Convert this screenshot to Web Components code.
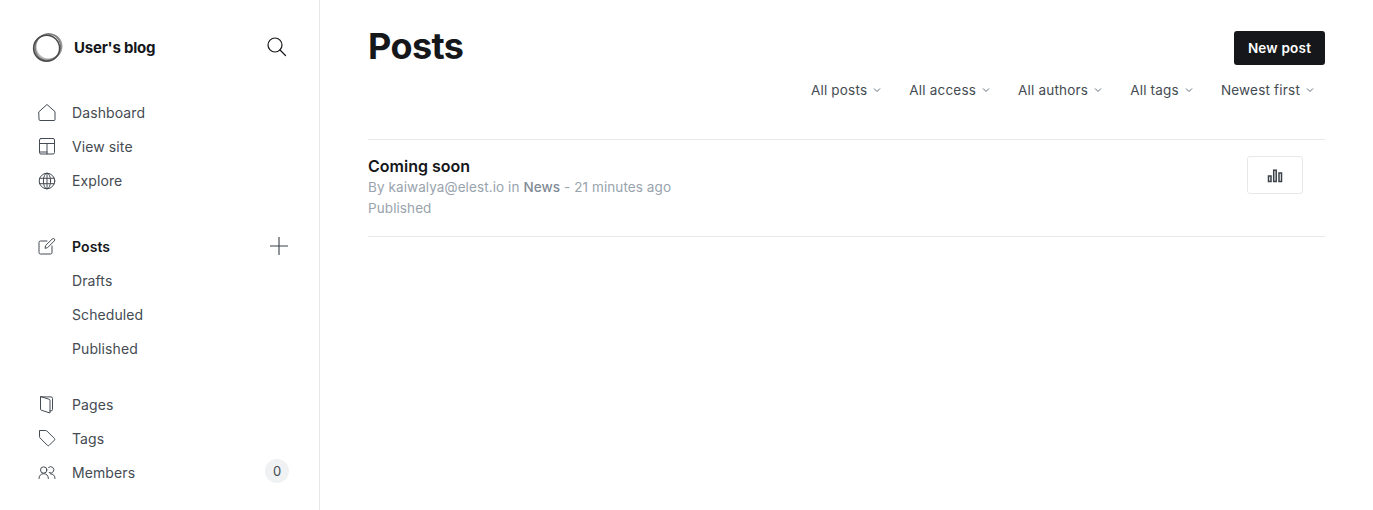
<!DOCTYPE html>
<html lang="en">
<head>
<meta charset="utf-8">
<title>Posts</title>
<style>
  html, body { margin: 0; height: 100%; background: #fff; }
  body { font-family: Inter, "Liberation Sans", sans-serif; overflow: hidden; }
</style>
</head>
<body>
<app-shell>
  <blog-sidebar slot="side">
    <nav-group>
      <nav-item label="Dashboard"><svg viewBox="0 0 18 18"><path d="M1 7.700 9 .5l8 7.200v7.800a1 1 0 0 1-1 1H2a1 1 0 0 1-1-1z"/></svg></nav-item>
      <nav-item label="View site"><svg viewBox="0 0 18 18"><rect x="1.500" y=".5" width="15" height="15.500" rx="1.500"/><path d="M1.500 5.500h15M9 5.500V16M1.500 14H9"/></svg></nav-item>
      <nav-item label="Explore"><svg viewBox="0 0 18 18"><circle cx="9" cy="9" r="7.800"/><ellipse cx="9" cy="9" rx="3.600" ry="7.800"/><path d="M1.700 6.300h14.600M1.700 11.700h14.600M9 1.200v15.600"/></svg></nav-item>
    </nav-group>
    <nav-group>
      <nav-item label="Posts" active>
        <svg viewBox="0 0 18 18"><path d="M9 3H2.500A1.500 1.500 0 0 0 1 4.500v10A1.500 1.500 0 0 0 2.500 16h10a1.500 1.500 0 0 0 1.500-1.500V8"/><path d="M14.300 .9a1.400 1.400 0 0 1 2 2L9.500 9.700 7 10.300l.6-2.500z"/></svg>
        <svg slot="end" class="plus" width="18" height="18" viewBox="0 0 18 18" fill="none" stroke="#394047" stroke-width="1.100" style="margin-right:1px"><path d="M9 0v18M0 9h18"/></svg>
      </nav-item>
      <nav-item label="Drafts"></nav-item>
      <nav-item label="Scheduled"></nav-item>
      <nav-item label="Published"></nav-item>
    </nav-group>
    <nav-group>
      <nav-item label="Pages"><svg viewBox="0 0 18 18"><path d="M2.500 .9h10.500a1.500 1.500 0 0 1 1.500 1.500v11a1.500 1.500 0 0 1-1.500 1.500h-1"/><path d="M2.500 .9v12.300c0 .4.200.7.600.9l8.900 2.900V4.200c0-.5-.300-.8-.7-.9z"/></svg></nav-item>
      <nav-item label="Tags"><svg viewBox="0 0 18 18"><path d="M2 .5h5.800c.4 0 .8.200 1 .4l7.700 7.700a1 1 0 0 1 0 1.400l-5.500 5.500a1 1 0 0 1-1.400 0L1.900 7.800a1.500 1.500 0 0 1-.4-1V1a.5.500 0 0 1 .5-.5z"/></svg></nav-item>
      <nav-item label="Members"><svg viewBox="0 0 18 18"><circle cx="5.700" cy="6" r="3.200"/><path d="M1 14.500c0-3 2-4.800 4.700-4.800s4.700 1.800 4.700 4.800"/><path d="M10.600 3.400a3.200 3.200 0 1 1 .6 5.300"/><path d="M12.500 9.800c2.600 0 4.500 1.800 4.500 4.700"/></svg><count-badge slot="end">0</count-badge></nav-item>
    </nav-group>
  </blog-sidebar>

  <posts-header>
    <filter-select>All posts</filter-select>
    <filter-select>All access</filter-select>
    <filter-select>All authors</filter-select>
    <filter-select>All tags</filter-select>
    <filter-select>Newest first</filter-select>
  </posts-header>
  <post-row></post-row>
</app-shell>

<script>
// small helper so every element gets an open root from a string
function mount(el, html) {
  el.attachShadow({ mode: 'open' }).innerHTML = html;
}

class AppShell extends HTMLElement {
  constructor() {
    super();
    mount(this, `
      <style>
        :host { display: flex; height: 510px; color: #15171a; }
        .side { flex: 0 0 319px; border-right: 1px solid #e6e9eb; }
        main { flex: 1; min-width: 0; padding: 0 48px; }
      </style>
      <div class="side"><slot name="side"></slot></div>
      <main><slot></slot></main>
    `);
  }
}

class BlogSidebar extends HTMLElement {
  constructor() {
    super();
    mount(this, `
      <style>
        :host { display: block; padding: 30px 30px 0 32px; }
        header { display: flex; align-items: center; height: 34px; margin-bottom: 32px; }
        .logo { width: 31px; height: 31px; margin-right: 11px; flex: none; }
        .name { flex: 1; font-size: 15px; font-weight: 700; letter-spacing: -.2px; }
        .search { display: block; margin-right: 2px; }
      </style>
      <header>
        <svg class="logo" viewBox="0 0 31 31" fill="none">
          <ellipse cx="16.800" cy="14.600" rx="12.900" ry="12.700" stroke="#bbb" stroke-width="1.400"/>
          <ellipse cx="16" cy="15" rx="13.800" ry="12.600" stroke="#999" stroke-width="1.500" transform="rotate(-25 16 15)"/>
          <ellipse cx="16" cy="15.200" rx="12.600" ry="13.400" stroke="#777" stroke-width="1" transform="rotate(15 16 15)"/>
          <ellipse cx="14.600" cy="16.200" rx="13" ry="13" stroke="#4a4a4a" stroke-width="1.500"/>
        </svg>
        <span class="name">User's blog</span>
        <svg class="search" width="20" height="20" viewBox="0 0 20 20" fill="none" stroke="#15171a" stroke-width="1.200" stroke-linecap="round"><circle cx="8" cy="8" r="7"/><path d="M13 13l5.500 5.500"/></svg>
      </header>
      <slot></slot>
    `);
  }
}

class NavGroup extends HTMLElement {
  constructor() {
    super();
    mount(this, `
      <style>
        :host { display: block; margin-bottom: 22px; }
        :host(:first-of-type) { margin-bottom: 32px; }
      </style>
      <slot></slot>
    `);
  }
}

class NavItem extends HTMLElement {
  constructor() {
    super();
    const active = this.hasAttribute('active');
    mount(this, `
      <style>
        :host { display: flex; align-items: center; height: 34px; font-size: 14px; letter-spacing: .1px; color: #444b52; }
        .icon { flex: none; width: 18px; height: 18px; margin: 0 16px 0 6px; }
        .icon ::slotted(svg) { display: block; width: 18px; height: 18px; fill: none; stroke: #444b52; stroke-width: 1; stroke-linejoin: round; stroke-linecap: round; }
        .label { flex: 1; padding-bottom: 2px; }
        .label.on { color: #15171a; font-weight: 600; letter-spacing: .1px; }
        .end { display: flex; margin-top: -2px; }
      </style>
      <span class="icon"><slot></slot></span>
      <span class="label ${active ? 'on' : ''}">${this.getAttribute('label')}</span>
      <span class="end"><slot name="end"></slot></span>
    `);
  }
}

class CountBadge extends HTMLElement {
  constructor() {
    super();
    mount(this, `
      <style>
        :host { display: flex; align-items: center; justify-content: center; width: 24px; height: 24px; border-radius: 50%; background: #eff1f3; font-size: 13px; color: #444b52; letter-spacing: 0; margin-top: -3px; }
      </style>
      <slot></slot>
    `);
  }
}

class PostsHeader extends HTMLElement {
  constructor() {
    super();
    mount(this, `
      <style>
        :host { display: block; padding-top: 25px; height: 114px; border-bottom: 1px solid #e6e9eb; }
        .top { display: flex; justify-content: space-between; align-items: flex-start; }
        h1 { margin: 0; font-size: 36px; line-height: 42px; font-weight: 700; letter-spacing: -.6px; color: #15171a; }
        button { margin-top: 6px; height: 34px; width: 91px; padding: 0; border: 0; border-radius: 3px; background: #15171a; color: #fff; font: 600 13.500px Inter, "Liberation Sans", sans-serif; letter-spacing: .2px; }
        .filters { display: flex; justify-content: flex-end; gap: 28px; margin-top: 13px; padding-right: 11px; }
      </style>
      <div class="top"><h1>Posts</h1><button>New post</button></div>
      <div class="filters"><slot></slot></div>
    `);
  }
}

class FilterSelect extends HTMLElement {
  constructor() {
    super();
    mount(this, `
      <style>
        :host { display: flex; align-items: center; gap: 6px; height: 20px; font-size: 13.500px; letter-spacing: .2px; color: #444b52; white-space: nowrap; }
        svg { display: block; width: 8px; height: 8px; margin-top: -1px; }
      </style>
      <slot></slot>
      <svg viewBox="0 0 8 8" fill="none" stroke="#626d79" stroke-width="1"><path d="M1 2.500l3 3 3-3"/></svg>
    `);
  }
}

class PostRow extends HTMLElement {
  constructor() {
    super();
    mount(this, `
      <style>
        :host { display: flex; justify-content: space-between; height: 96px; border-bottom: 1px solid #e6e9eb; box-sizing: content-box; }
        .text { padding-top: 16px; }
        h3 { margin: 0; font-size: 16px; line-height: 21px; font-weight: 600; color: #15171a; }
        p { margin: 0; font-size: 13.500px; line-height: 21px; color: #99a3ad; letter-spacing: .09px; }
        b { font-weight: 500; color: #7f8b96; }
        .stats { display: flex; align-items: center; justify-content: center; width: 56px; height: 38px; box-sizing: border-box; margin: 16px 22px 0 0; border: 1px solid #e6e9eb; border-radius: 3px; background: #fff; padding: 0; }
        .stats svg { margin-top: 1px; }
      </style>
      <div class="text">
        <h3>Coming soon</h3>
        <p>By kaiwalya@elest.io in <b>News</b> - 21 minutes ago</p>
        <p>Published</p>
      </div>
      <button class="stats" aria-label="Analytics">
        <svg width="16" height="14" viewBox="0 0 16 14" fill="none" stroke="#394047" stroke-width="1.500"><rect x="1.500" y="7" width="2.500" height="5.500"/><rect x="6.700" y="1.200" width="2.500" height="11.300"/><rect x="12" y="4" width="2.500" height="8.500"/></svg>
      </button>
    `);
  }
}

customElements.define('app-shell', AppShell);
customElements.define('blog-sidebar', BlogSidebar);
customElements.define('nav-group', NavGroup);
customElements.define('nav-item', NavItem);
customElements.define('count-badge', CountBadge);
customElements.define('posts-header', PostsHeader);
customElements.define('filter-select', FilterSelect);
customElements.define('post-row', PostRow);
</script>
</body>
</html>
